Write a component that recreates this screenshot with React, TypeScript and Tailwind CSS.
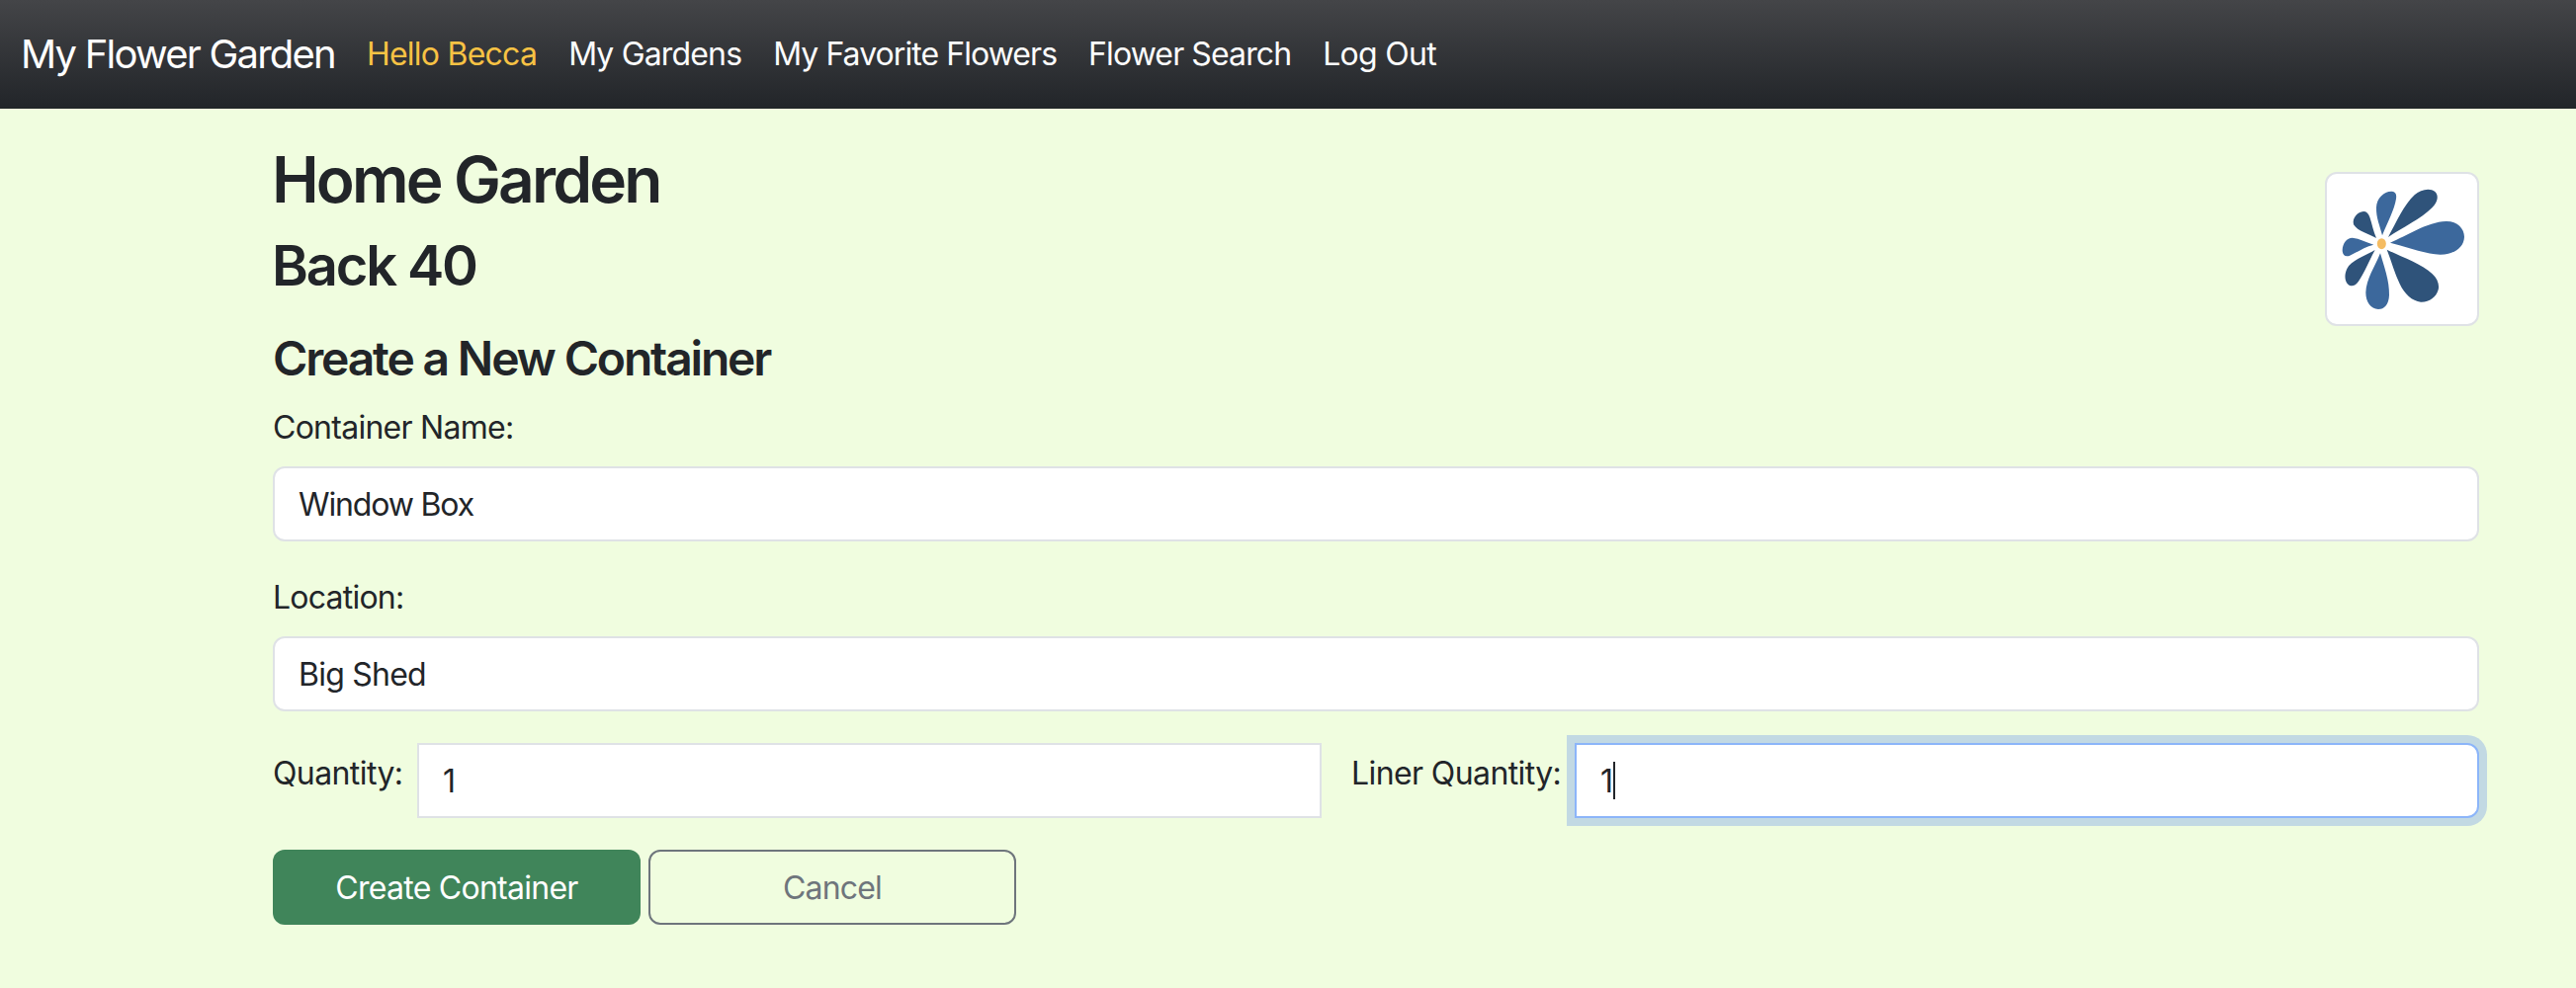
const navLinks = [
  { label: "Hello Becca", className: "text-[#f7c244] tracking-[-0.76px]" },
  { label: "My Gardens", className: "text-[#fcfcfc] tracking-[-0.84px]" },
  { label: "My Favorite Flowers", className: "text-[#fcfcfc] tracking-[-0.94px]" },
  { label: "Flower Search", className: "text-[#fcfcfc] tracking-[-0.9px]" },
  { label: "Log Out", className: "text-[#fcfcfc] tracking-[-0.72px]" },
];

function NavBar() {
  return (
    <nav className="flex h-[110px] items-center gap-8 bg-linear-to-b from-[#444548] to-[#222529] pl-[21px]">
      <a href="#" className="text-[40px] leading-[60px] tracking-[-1.78px] whitespace-nowrap text-white">
        My Flower Garden
      </a>
      {navLinks.map((link) => (
        <a key={link.label} href="#" className={`text-[32px] leading-[48px] whitespace-nowrap ${link.className}`}>
          {link.label}
        </a>
      ))}
    </nav>
  );
}

function FlowerLogo() {
  return (
    <div className="mt-8 h-[156px] w-[156px] shrink-0 rounded-xl border-2 border-[#dfe2e6] bg-white">
      <svg viewBox="72 48 456 456" className="block h-full w-full" aria-hidden="true">
        <g fill="#3c689c">
          <path d="M240 235 C233 205 221 182 222 150 C223 121 246 100 269 101 C281 102 284 111 282 124 C277 158 255 197 240 235Z" />
          <path d="M264 257 C315 236 376 194 433 192 C468 191 489 214 489 239 C488 272 457 293 416 293 C366 291 314 269 264 257Z" />
          <path d="M234 289 C246 331 262 372 261 416 C260 444 246 459 228 459 C205 458 190 437 190 408 C191 368 218 329 234 289Z" />
          <path d="M214 263 C186 269 164 286 140 297 C127 301 119 294 119 279 C120 258 133 242 149 242 C172 244 192 256 214 263Z" />
        </g>
        <g fill="#2f537a">
          <path d="M258 240 C283 194 306 142 338 112 C356 95 385 89 400 102 C412 113 409 133 391 151 C358 184 302 211 258 240Z" />
          <path d="M254 278 C298 300 360 321 392 352 C408 367 414 385 410 400 C403 424 382 438 357 437 C331 435 307 412 293 382 C277 350 268 312 254 278Z" />
          <path d="M218 279 C201 310 187 347 168 374 C158 389 145 391 136 383 C125 373 125 352 133 336 C146 310 187 298 218 279Z" />
          <path d="M222 243 C200 231 165 222 153 202 C148 181 166 163 183 162 C192 162 198 168 202 179 C209 200 213 222 222 243Z" />
        </g>
        <ellipse cx="238" cy="260" rx="13.5" ry="16.5" fill="#f5bc62" />
      </svg>
    </div>
  );
}

const fieldClass =
  "flex h-[76px] items-center border-2 bg-white px-6 pt-[2px] text-[32px] leading-[48px]";

function TextField({ label, value, labelClass, valueClass }: {
  label: string;
  value: string;
  labelClass: string;
  valueClass: string;
}) {
  return (
    <div className="mb-8">
      <label className={`mb-4 block h-12 text-[32px] leading-[49px] ${labelClass}`}>{label}</label>
      <div className={`${fieldClass} rounded-xl border-[#dfe2e6] ${valueClass}`}>{value}</div>
    </div>
  );
}

export default function App() {
  return (
    <div className="min-h-[1000px] bg-[#f0fddf] font-['Inter',sans-serif] text-[#222529]">
      <NavBar />
      <main className="pt-8 pr-[98px] pl-[276px]">
        <header className="flex h-[192px] items-start justify-between">
          <div className="-ml-px pt-px">
            <h2 className="mb-4 text-[64px] leading-[77px] font-[560] tracking-[-2.85px]">Home Garden</h2>
            <h3 className="text-[56px] leading-[67px] font-[560] tracking-[-2.15px]">Back 40</h3>
          </div>
          <FlowerLogo />
        </header>
        <form>
          <h4 className="mb-4 h-[58px] text-[48px] leading-[58px] font-[560] tracking-[-2.17px]">
            Create a New Container
          </h4>
          <TextField label="Container Name:" value="Window Box" labelClass="tracking-[-0.73px]" valueClass="tracking-[-1.15px]" />
          <TextField label="Location:" value="Big Shed" labelClass="tracking-[-0.77px]" valueClass="tracking-[-0.77px]" />
          <div className="mb-8 flex">
            <label className="h-12 w-[146px] pt-[6px] text-[32px] leading-[49px] tracking-[-0.6px] whitespace-nowrap">
              Quantity:
            </label>
            <div className={`${fieldClass} w-[915px] border-[#dfe2e6]`}>1</div>
            <label className="ml-[30px] h-12 w-[226px] pt-[6px] text-[32px] leading-[49px] tracking-[-0.6px] whitespace-nowrap">
              Liner Quantity:
            </label>
            <div className={`${fieldClass} flex-1 rounded-r-xl border-[#8cb5f9] shadow-[0_0_0_8px_#c2d9e3]`}>
              <span className="w-[13px]">1</span>
              <span className="mb-[2px] h-[38px] w-[2px] bg-[#222529]" />
            </div>
          </div>
          <div className="flex gap-2">
            <button type="button" className="h-[76px] w-[372px] rounded-xl bg-[#40855a] pt-[2px] text-[32px] leading-[48px] tracking-[-0.73px] text-white">
              Create Container
            </button>
            <button type="button" className="h-[76px] w-[372px] rounded-xl border-2 border-[#6e757c] pt-[2px] text-[32px] leading-[48px] tracking-[-0.84px] text-[#6e757c]">
              Cancel
            </button>
          </div>
        </form>
      </main>
    </div>
  );
}
